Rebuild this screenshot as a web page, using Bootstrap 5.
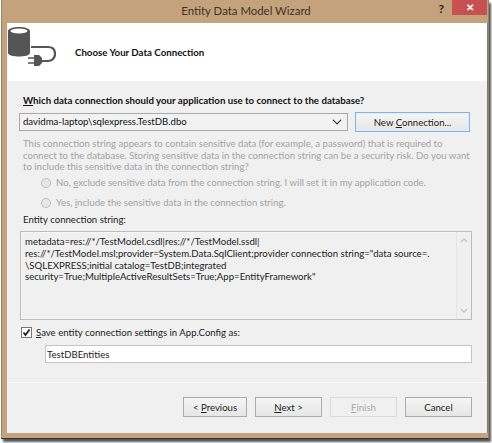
<!DOCTYPE html>
<html lang="en"><head><meta charset="utf-8"><title>Entity Data Model Wizard</title>
<link href="https://cdn.jsdelivr.net/npm/bootstrap@5.3.0/dist/css/bootstrap.min.css" rel="stylesheet">
<style>
html,body{margin:0;height:443px;overflow:hidden;background:#fff}
body{font-family:Lato,"Noto Sans",sans-serif;font-size:9.6px;color:#222;padding:0 3px 2px 0}
.wiz-win{width:488px;height:439px;background:#c3a27c;border:1px solid #8f8372;border-top:0;border-bottom:1px solid #333;box-shadow:2px 3px 2px #555;padding:0 0 5px 5px;margin-left:1px}
.wiz-title{height:23px;position:relative;font-size:11.4px;color:#3d3428;line-height:22px;padding-right:3px}
.wiz-help{position:absolute;right:44px;top:0;font-weight:700;font-size:12px;color:#222;line-height:17px}
.wiz-close{position:absolute;right:1px;top:0;width:35px;height:15px;background:#c75050;color:#fff;font-size:10px;font-weight:700;line-height:15px;text-align:center}
.wiz-client{width:481px;height:410px;background:#f0f0f0;border-right:1px solid #8a7a66;border-left:1px solid #f4f4f4}
.wiz-head{height:58px;background:#fff}
.wiz-head svg{margin-top:3px}
.wiz-headtext{margin-left:19px;font-weight:700;font-size:9.7px;color:#111;margin-top:23px;line-height:12px}
.wiz-body{padding:12px 14px 0 11px;height:301px}
.wiz-q{font-weight:700;font-size:9.7px;color:#111;line-height:14px;margin-left:4px}
.wiz-row{margin-top:6px;gap:7px}
.wiz-select{width:329px;height:18px;padding:0 18px 0 3px;font-size:9.6px;line-height:16px;border-radius:0;border:1px solid #a9a9a9;background-color:#f2f2f2;color:#111;background-position:right 4px center;background-size:12px 10px;font-family:inherit}
.wiz-btn{border-radius:0;border:1px solid #acacac;background:linear-gradient(#f5f5f5,#e6e6e6);color:#222;font-size:9.6px;padding:0;height:20px;line-height:17px;font-family:inherit}
.wiz-new{width:115px;border:1px solid #7eb4ea;margin-top:-1px;box-shadow:inset 0 0 0 1px #e4eefa}
.wiz-dis{color:#a3a3a3;font-size:9.6px;line-height:11.7px;margin:6px 0 0 4px;width:452px;white-space:nowrap}
.wiz-radio{margin:0;margin-left:22px;display:flex;align-items:center;height:20px;gap:5px;color:#a3a3a3;padding:0;min-height:0}
.wiz-radio .form-check-input{float:none;margin:0;width:10px;height:10px;background-color:#e8e8e8;border:1px solid #bdbdbd;opacity:1}
.wiz-label{margin:0 0 0 4px;line-height:14px;color:#222}
.wiz-area{margin-top:4px;height:89px;width:452px;border:1px solid #bcbcbc;display:flex;margin-left:1px;box-shadow:inset 0 0 0 1px #f6f6f6}
.wiz-text{flex:1;padding:4px 0 0 4px;line-height:11.7px;color:#222;white-space:nowrap}
.wiz-scroll{width:15px;border-left:1px solid #e4e4e4;background:#f0f0f0;display:flex;flex-direction:column;justify-content:space-between;align-items:center;padding:6px 0}
.wiz-check{margin:6px 0 0 2px;padding:0;display:flex;align-items:center;gap:4px;min-height:0;line-height:13px;color:#222;position:relative}
.wiz-check .form-check-input{float:none;margin:0;width:11px;height:11px;border-radius:0;border:1px solid #777;background-color:#fff;opacity:1;background-image:none}
.wiz-checkmark{position:absolute;left:0;top:1px}
.wiz-input{margin:6px 0 0 26px;width:427px;height:18px;padding:0 1px;font-size:9.6px;border-radius:0;border:1px solid #c4c4c4;color:#222;line-height:15px;font-family:inherit}
.wiz-foot{border-top:1px solid #fafafa;height:50px;padding:14px 15px 0 0;gap:8px}
.wiz-foot .wiz-btn{width:67px}
.wiz-foot .wiz-prev{width:64px}
.wiz-foot .btn:disabled{background:#f0f0f0;border-color:#d9d9d9;color:#a8a8a8;opacity:1}
</style></head><body>
<div class="wiz-win">
 <div class="wiz-title text-center">
  <span>Entity Data Model Wizard</span>
  <span class="wiz-help">?</span><span class="wiz-close">✕</span>
 </div>
 <div class="wiz-client">
  <div class="wiz-head d-flex">
   <svg width="48" height="42" viewBox="0 0 48 42"><path d="M0 5v22c0 2.500 6 3.500 11 3.500s11-1 11-3.500V5c0-2.500-6-4-11-4S0 2.500 0 5z" fill="#555"/><ellipse cx="11" cy="5" rx="8.500" ry="2.600" fill="#fff"/><path d="M23 21H40C45 21 47 24 47 28C47 32 44 35 40 35H33" fill="none" stroke="#555" stroke-width="2.200"/><path d="M26 29h5l3 3v5l-3 3h-5z" fill="#555"/><path d="M20 32h6M20 37h6" stroke="#555" stroke-width="1.500"/></svg>
   <div class="wiz-headtext">Choose Your Data Connection</div>
  </div>
  <div class="wiz-body">
   <div class="wiz-q"><u>W</u>hich data connection should your application use to connect to the database?</div>
   <div class="wiz-row d-flex">
    <select class="form-select wiz-select"><option>davidma-laptop\sqlexpress.TestDB.dbo</option></select>
    <button type="button" class="btn wiz-btn wiz-new">New <u>C</u>onnection...</button>
   </div>
   <p class="wiz-dis">This connection string appears to contain sensitive data (for example, a password) that is required to<br>connect to the database. Storing sensitive data in the connection string can be a security risk. Do you want<br>to include this sensitive data in the connection string?</p>
   <div class="form-check wiz-radio"><input class="form-check-input" type="radio" disabled><span>No, <u>e</u>xclude sensitive data from the connection string. I will set it in my application code.</span></div>
   <div class="form-check wiz-radio"><input class="form-check-input" type="radio" disabled><span>Yes, <u>i</u>nclude the sensitive data in the connection string.</span></div>
   <div class="wiz-label">Entity connection string:</div>
   <div class="wiz-area">
    <div class="wiz-text">metadata=res://*/TestModel.csdl|res://*/TestModel.ssdl|<br>res://*/TestModel.msl;provider=System.Data.SqlClient;provider connection string="data source=.<br>\SQLEXPRESS;initial catalog=TestDB;integrated<br>security=True;MultipleActiveResultSets=True;App=EntityFramework"</div>
    <div class="wiz-scroll">
     <svg width="8" height="5" viewBox="0 0 8 5"><path d="M1 4l3-3 3 3" fill="none" stroke="#c4c4c4" stroke-width="1.300"/></svg>
     <svg width="8" height="5" viewBox="0 0 8 5"><path d="M1 1l3 3 3-3" fill="none" stroke="#c4c4c4" stroke-width="1.300"/></svg>
    </div>
   </div>
   <div class="form-check wiz-check"><input class="form-check-input" type="checkbox" checked><svg class="wiz-checkmark" width="11" height="11" viewBox="0 0 11 11"><path d="M2.500 5.500l2 2.500 4-5.500" fill="none" stroke="#222" stroke-width="1.800"/></svg><span><u>S</u>ave entity connection settings in App.Config as:</span></div>
   <input class="form-control wiz-input" type="text" value="TestDBEntities">
  </div>
  <div class="wiz-foot d-flex justify-content-end">
   <button type="button" class="btn wiz-btn wiz-prev">&lt; <u>P</u>revious</button>
   <button type="button" class="btn wiz-btn"><u>N</u>ext &gt;</button>
   <button type="button" class="btn wiz-btn" disabled><u>F</u>inish</button>
   <button type="button" class="btn wiz-btn">Cancel</button>
  </div>
 </div>
</div>
<script src="https://cdn.jsdelivr.net/npm/bootstrap@5.3.0/dist/js/bootstrap.bundle.min.js"></script>
</body></html>
